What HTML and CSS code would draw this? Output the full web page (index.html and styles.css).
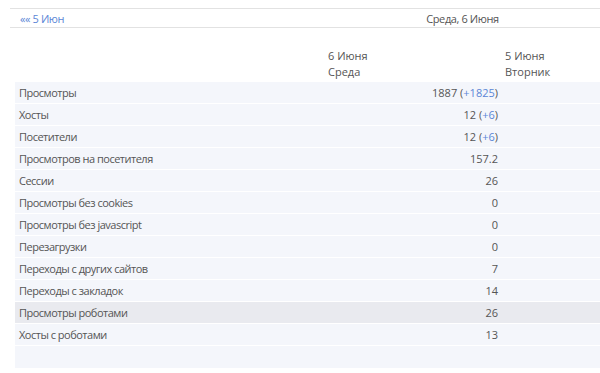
FILE: index.html
```html
<!DOCTYPE html>
<html lang="ru">
<head>
    <meta charset="UTF-8">
    <title>Статистика</title>
    <link rel="stylesheet" href="styles.css">
</head>
<body>

    <nav class="daybar">
        <a class="prev" href="#">«« 5 Июн</a>
        <span class="current">Среда, 6 Июня</span>
    </nav>

    <table class="stats">
        <thead>
            <tr>
                <th></th>
                <th class="col-now">6 Июня<br>Среда</th>
                <th class="col-prev">5 Июня<br>Вторник</th>
            </tr>
        </thead>
        <tbody>
            <tr><td>Просмотры</td><td class="num">1887 (<span class="diff">+1825</span>)</td><td></td></tr>
            <tr><td>Хосты</td><td class="num">12 (<span class="diff">+6</span>)</td><td></td></tr>
            <tr><td>Посетители</td><td class="num">12 (<span class="diff">+6</span>)</td><td></td></tr>
            <tr><td>Просмотров на посетителя</td><td class="num">157.2</td><td></td></tr>
            <tr><td>Сессии</td><td class="num">26</td><td></td></tr>
            <tr><td>Просмотры без cookies</td><td class="num">0</td><td></td></tr>
            <tr><td>Просмотры без javascript</td><td class="num">0</td><td></td></tr>
            <tr><td>Перезагрузки</td><td class="num">0</td><td></td></tr>
            <tr><td>Переходы с других сайтов</td><td class="num">7</td><td></td></tr>
            <tr><td>Переходы с закладок</td><td class="num">14</td><td></td></tr>
            <tr class="hover"><td>Просмотры роботами</td><td class="num">26</td><td></td></tr>
            <tr><td>Хосты с роботами</td><td class="num">13</td><td></td></tr>
            <tr class="empty"><td></td><td></td><td></td></tr>
        </tbody>
    </table>

</body>
</html>
```

FILE: styles.css
```css
body {
    margin: 0;
    background: #fff;
    font-family: 'Open Sans', sans-serif;
    font-size: 11px;
    color: #555;
}

.daybar {
    display: flex;
    align-items: center;
    height: 18px;
    margin: 8px 0 0 10px;
    border-top: 1px solid #e2e2e2;
    border-bottom: 1px solid #e2e2e2;
    letter-spacing: -0.4px;
}

.prev {
    width: 305px;
    padding-left: 10px;
    color: #5b86d6;
    text-decoration: none;
}

.current {
    flex: 1;
    text-align: center;
    color: #555;
}

.stats {
    margin: 0 0 0 15px;
    width: 585px;
    border-collapse: collapse;
}

.stats th {
    height: 34px;
    padding: 20px 0 0;
    font-weight: normal;
    text-align: left;
    vertical-align: top;
    line-height: 16px;
}

.stats th:first-child {
    width: 313px;
}

.col-now {
    width: 177px;
}

.stats td {
    height: 21px;
    padding: 0 4px;
    background: #f4f6fb;
    border-bottom: 1px solid #fff;
    white-space: nowrap;
}

.stats td:first-child {
    letter-spacing: -0.5px;
}

.stats td.num {
    text-align: right;
    padding-right: 7px;
}

.stats tr.hover td {
    background: #e9eaef;
}

.stats tr.empty td {
    height: 22px;
}

.diff {
    color: #5b86d6;
}
```
